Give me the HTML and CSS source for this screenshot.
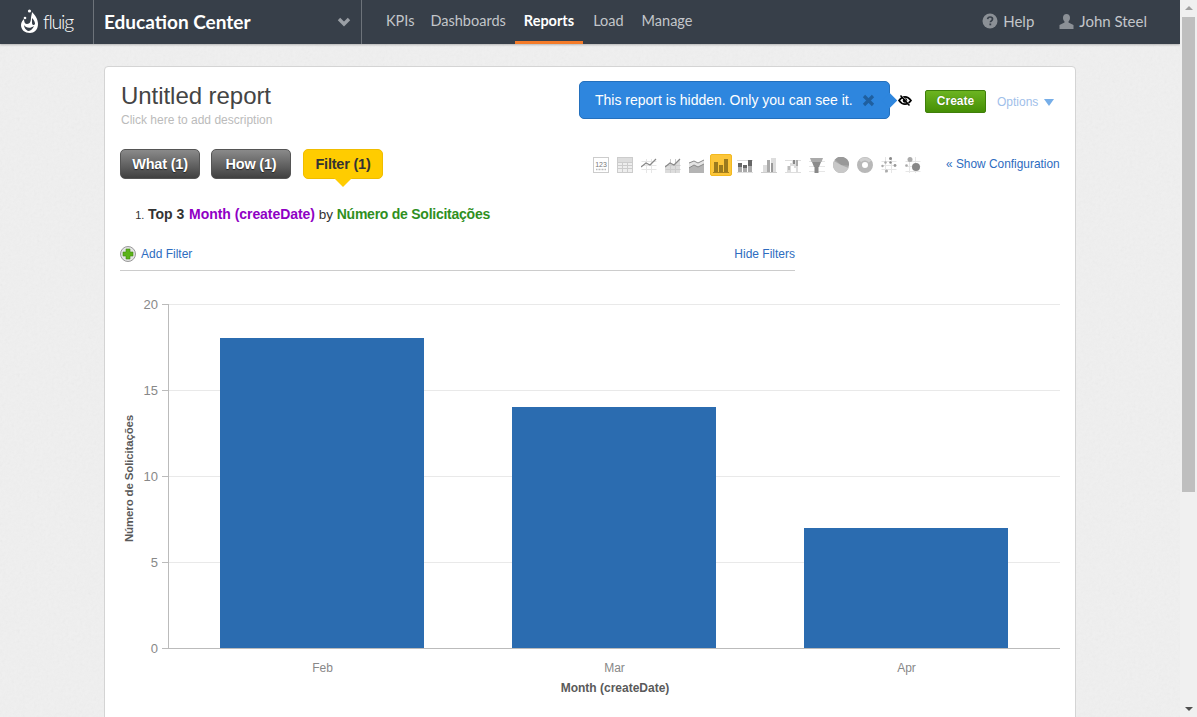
FILE: index.html
```html
<!DOCTYPE html>
<html lang="en">
<head>
<meta charset="utf-8">
<title>Untitled report</title>
<link rel="stylesheet" href="styles.css">
</head>
<body>
<div class="viewport">
  <div class="page">
    <header class="topbar">
      <a class="logo">
        <svg class="logo-mark" width="19" height="26" viewBox="0 0 19 26">
          <circle cx="9.500" cy="2" r="1.600" fill="#fff"/>
          <circle cx="5" cy="9" r="1.300" fill="#fff"/>
          <path d="M12 3c3 3 6 7 6 12 0 6-4 9-8 9-5 0-9-3-9-8 0-3 2-5 3-6 0 3 1 5 3 5 3 0 4-3 4-6 0-2 1-4 1-6z" fill="#fff"/>
          <path d="M4 16c2 3 6 4 10 1-1 3-4 5-6 5-2-1-4-3-4-6z" fill="#373f49"/>
          <path d="M12 9c2 2 3 4 3 6-1 2-3 1-3-1z" fill="#373f49"/>
        </svg>
        <span class="logo-text">fluig</span>
      </a>
      <div class="context">
        <span class="context-name">Education Center</span>
        <svg class="chevron" width="14" height="10" viewBox="0 0 14 10"><path d="M2 2l5 5 5-5" fill="none" stroke="#9a9fa5" stroke-width="3.400"/></svg>
      </div>
      <nav class="nav">
        <a class="nav-item">KPIs</a>
        <a class="nav-item">Dashboards</a>
        <a class="nav-item nav-active">Reports</a>
        <a class="nav-item">Load</a>
        <a class="nav-item">Manage</a>
      </nav>
      <div class="user-menu">
        <a class="help">
          <svg width="16" height="16" viewBox="0 0 16 16"><circle cx="8" cy="8" r="7.500" fill="#8b9096"/><path d="M5.600 6.200C5.800 4.800 6.800 4 8.100 4c1.400 0 2.400.8 2.400 2 0 1-.6 1.500-1.300 2-.6.400-.8.700-.8 1.300" fill="none" stroke="#373f49" stroke-width="1.700"/><rect x="7.400" y="10.500" width="1.800" height="1.800" fill="#373f49"/></svg>
          <span>Help</span>
        </a>
        <a class="user">
          <svg width="15" height="15" viewBox="0 0 15 15"><path d="M7.500 0C5.300 0 4 1.600 4 3.800c0 1.600.7 3 1.500 3.800v1L.5 11v4h14v-4l-5-2.400v-1c.8-.8 1.500-2.200 1.500-3.800C11 1.600 9.700 0 7.500 0z" fill="#8b9096"/></svg>
          <span>John Steel</span>
        </a>
      </div>
    </header>

    <main class="card">
      <div class="report-head">
        <div class="report-title">
          <h1>Untitled report</h1>
          <p>Click here to add description</p>
        </div>
        <div class="report-actions">
          <div class="notice">
            <span>This report is hidden. Only you can see it.</span>
            <svg class="notice-close" width="13" height="13" viewBox="0 0 13 13"><path d="M2 2l9 9M11 2l-9 9" stroke="#1f5f9f" stroke-width="3.200"/></svg>
          </div>
          <svg class="eye" width="14" height="11" viewBox="0 0 14 11"><path d="M1 5.500C2.800 3 4.800 1.800 7 1.800S11.200 3 13 5.500C11.200 8 9.200 9.200 7 9.200S2.800 8 1 5.500z" fill="none" stroke="#000" stroke-width="1.700"/><circle cx="7" cy="5.500" r="2.200" fill="#000"/><path d="M3.400 .5l9 10" stroke="#fff" stroke-width="1"/><path d="M2.500 .5l9 10" stroke="#000" stroke-width="1.500"/></svg>
          <button class="create">Create</button>
          <a class="options">Options<i class="options-arrow"></i></a>
        </div>
      </div>

      <div class="tabs-row">
        <div class="tabs">
          <a class="tab">What (1)</a>
          <a class="tab">How (1)</a>
          <a class="tab tab-active">Filter (1)</a>
        </div>
        <div class="chart-types">
          <svg class="ct" viewBox="0 0 16 16"><rect x=".5" y=".5" width="15" height="15" fill="#fff" stroke="#ccc"/><text x="8" y="9.500" class="ct-num">123</text><path d="M3 12.500h10" stroke="#bbb" stroke-dasharray="1 .5" stroke-width="1.500"/></svg>
          <svg class="ct" viewBox="0 0 16 16"><rect x=".5" y=".5" width="15" height="15" fill="#eee" stroke="#ccc"/><path d="M0 5.500h16M0 8.500h16M0 11.500h16M5.500 0v16M10.500 0v16" stroke="#ccc"/><rect x="1" y="1" width="14" height="4" fill="#ddd"/></svg>
          <svg class="ct" viewBox="0 0 16 16"><path d="M.5 4.500h15M.5 8.500h15M.5 12.500h15M5.500 2v14M10.500 2v14" stroke="#e6e6e6"/><path d="M0 10l5-4 4 2 6-6" fill="none" stroke="#888" stroke-width="1.200"/></svg>
          <svg class="ct" viewBox="0 0 16 16"><path d="M0 10l5-4 4 2 6-6v14H0z" fill="#dcdcdc"/><path d="M.5 8.500h15M.5 12.500h15M5.500 2v14M10.500 2v14" stroke="#ccc"/><path d="M0 10l5-4 4 2 6-6" fill="none" stroke="#888" stroke-width="1.200"/></svg>
          <svg class="ct" viewBox="0 0 16 16"><path d="M0 6l5-2 4 2 6-3v13H0z" fill="#e4e4e4"/><path d="M0 11l5-3 4 2 6-3v9H0z" fill="#b4b4b4"/><path d="M0 6l5-2 4 2 6-3M0 11l5-3 4 2 6-3" fill="none" stroke="#888"/></svg>
          <span class="ct-active"><svg width="16" height="16" viewBox="0 0 16 16"><path d="M0 15.500h16" stroke="#a8801c"/><rect x="1" y="5" width="4" height="10" fill="#9b7a1e"/><rect x="6" y="8" width="4" height="7" fill="#9b7a1e"/><rect x="11" y="2" width="4" height="13" fill="#9b7a1e"/></svg></span>
          <svg class="ct" viewBox="0 0 16 16"><path d="M0 15.500h16M0 3.500h16" stroke="#ddd"/><rect x="1" y="6" width="4" height="4" fill="#666"/><rect x="1" y="10" width="4" height="5" fill="#aaa"/><rect x="6" y="8" width="4" height="3" fill="#666"/><rect x="6" y="11" width="4" height="4" fill="#aaa"/><rect x="11" y="3" width="4" height="6" fill="#666"/><rect x="11" y="9" width="4" height="6" fill="#aaa"/></svg>
          <svg class="ct" viewBox="0 0 16 16"><path d="M0 15.500h16" stroke="#ccc"/><rect x="2" y="8" width="4" height="7" fill="#ddd"/><rect x="6" y="3" width="3" height="12" fill="#aaa"/><rect x="10" y="1" width="5" height="14" fill="#ddd"/><rect x="10" y="6" width="2" height="9" fill="#999"/></svg>
          <svg class="ct" viewBox="0 0 16 16"><path d="M0 3.500h16M0 15.500h16" stroke="#ddd"/><path d="M2 15V9h3V6h2V3h6v12h-2v-4H9v-2H6v6z" fill="#ddd"/><rect x="8" y="3" width="2" height="4" fill="#888"/><rect x="11" y="3" width="2" height="6" fill="#aaa"/><rect x="3" y="9" width="2" height="4" fill="#bbb"/></svg>
          <svg class="ct" viewBox="0 0 16 16"><path d="M0 4.500h16M0 9.500h16M0 14.500h16" stroke="#e6e6e6"/><path d="M1 1h13l-1.500 4h-10z" fill="#aaa"/><path d="M3 5h9l-2 5H5z" fill="#8c8c8c"/><rect x="5.500" y="10" width="4" height="6" fill="#888"/></svg>
          <svg class="ct" viewBox="0 0 16 16"><circle cx="8" cy="8" r="8" fill="#aaa"/><path d="M8 8L2 2.500A8 8 0 0 1 16 8.500z" fill="#999"/><path d="M8 8L1 4 0 8a8 8 0 0 0 8 8 8 8 0 0 0 7.500-5z" fill="#c8c8c8"/></svg>
          <svg class="ct" viewBox="0 0 16 16"><circle cx="8" cy="8" r="5.500" fill="none" stroke="#b8b8b8" stroke-width="5"/><path d="M3 4a6.500 6.500 0 0 1 10 .5" fill="none" stroke="#d0d0d0" stroke-width="3"/></svg>
          <svg class="ct" viewBox="0 0 16 16"><path d="M.5 4.500h15M.5 8.500h15M.5 12.500h15M4.500 0v16M10.500 0v16" stroke="#e6e6e6"/><circle cx="9.500" cy="1.500" r="1.500" fill="#888"/><circle cx="4.500" cy="5.500" r="1.200" fill="#aaa"/><circle cx="9.500" cy="5.500" r="1.200" fill="#888"/><circle cx="14" cy="8.500" r="1.400" fill="#999"/><circle cx="1.500" cy="9" r="1.200" fill="#aaa"/><circle cx="5.500" cy="14" r="1.500" fill="#aaa"/></svg>
          <svg class="ct" viewBox="0 0 16 16"><path d="M.5 4.500h15M.5 9.500h15M.5 14.500h15M4.500 0v16M10.500 0v16" stroke="#e6e6e6"/><circle cx="5" cy="2.500" r="2.500" fill="#aaa"/><circle cx="1.500" cy="8.500" r="1.300" fill="#aaa"/><circle cx="11" cy="10" r="4" fill="#888"/></svg>
        </div>
        <a class="show-config">« Show Configuration</a>
      </div>

      <ol class="criteria">
        <li><b class="top">Top 3</b> <b class="dim">Month (createDate)</b> by <b class="measure">Número de Solicitações</b></li>
      </ol>

      <div class="filter-bar">
        <a class="add-filter">
          <svg width="16" height="16" viewBox="0 0 16 16"><circle cx="8" cy="8" r="7.500" fill="#e4e4e4" stroke="#999"/><path d="M6 3h4v3h3v4h-3v3H6v-3H3V6h3z" fill="#5bb318" stroke="#3f8a10" stroke-width=".6"/></svg>
          <span>Add Filter</span>
        </a>
        <a class="hide-filters">Hide Filters</a>
      </div>

      <svg class="chart" width="940" height="410" viewBox="0 0 940 410">
        <g class="grid">
          <path d="M48 14.500H940M48 100.500H940M48 186.500H940M48 272.500H940"/>
        </g>
        <rect x="100" y="48" width="204" height="310" class="bar"/>
        <rect x="392" y="117" width="204" height="241" class="bar"/>
        <rect x="684" y="238" width="204" height="120" class="bar"/>
        <path class="axis" d="M42 14.500H48M42 100.500H48M42 186.500H48M42 272.500H48M42 358.500H940M48.500 14V359"/>
        <g class="ylabels">
          <text x="38" y="19">20</text>
          <text x="38" y="105">15</text>
          <text x="38" y="191">10</text>
          <text x="38" y="277">5</text>
          <text x="38" y="363">0</text>
        </g>
        <g class="xlabels">
          <text x="202.500" y="382">Feb</text>
          <text x="494.500" y="382">Mar</text>
          <text x="786.500" y="382">Apr</text>
        </g>
        <text class="xtitle" x="495" y="402">Month (createDate)</text>
        <text class="ytitle" transform="translate(13 188.500) rotate(-90)">Número de Solicitações</text>
      </svg>
    </main>
  </div>
  <div class="scrollbar">
    <i class="sb-up"></i>
    <div class="sb-track"><div class="sb-thumb"></div></div>
    <i class="sb-down"></i>
  </div>
</div>
</body>
</html>
```

FILE: styles.css
```css
* { box-sizing: border-box; }
html, body { margin: 0; height: 100%; overflow: hidden; }
body { font-family: "Liberation Sans", Arial, sans-serif; color: #333; background: #eee; }
a { text-decoration: none; }

.viewport { display: flex; height: 717px; }
.page {
  flex: 1; min-width: 0; display: flex; flex-direction: column; align-items: center; overflow: hidden;
  background-color: #efefef;
  background-image: url("data:image/svg+xml,%3Csvg xmlns='http://www.w3.org/2000/svg' width='256' height='256'%3E%3Cfilter id='n'%3E%3CfeTurbulence type='fractalNoise' baseFrequency='.35' numOctaves='3' stitchTiles='stitch'/%3E%3CfeColorMatrix values='0 0 0 0 .5 0 0 0 0 .5 0 0 0 0 .5 .35 .35 .35 0 -.42'/%3E%3C/filter%3E%3Crect width='256' height='256' filter='url(%23n)' opacity='.22'/%3E%3C/svg%3E");
}

/* top bar */
.topbar {
  align-self: stretch; flex: none; height: 44px; display: flex; align-items: stretch;
  background: #373f49; box-shadow: 0 1px 2px rgba(0,0,0,.25);
  font-family: Lato, "Liberation Sans", sans-serif;
}
.logo { width: 93px; display: flex; align-items: center; padding: 0 0 1px 20px; gap: 4px; color: #fff; }
.logo-text { font-size: 19.500px; font-weight: 300; letter-spacing: -1.200px; }
.context {
  width: 269px; display: flex; align-items: center; justify-content: space-between;
  padding: 0 10px 1px; border-left: 1px solid #6d737a; border-right: 1px solid #6d737a;
}
.context-name { font-size: 19px; font-weight: 700; color: #fff; }
.nav { display: flex; padding-left: 15px; }
.nav-item { padding: 0 9px; line-height: 42px; font-size: 14.500px; color: #c3c6ca; border-bottom: 3px solid transparent; height: 44px; }
.nav-item:first-child { margin-right: -2px; }
.nav-active { margin-right: 1px; color: #fff; font-weight: 700; border-bottom-color: #f47b29; }
.user-menu { margin-left: auto; display: flex; align-items: center; gap: 25px; padding: 0 33px 2px 0; font-size: 15px; color: #c3c6ca; }
.help, .user { display: flex; align-items: center; gap: 5px; color: #c3c6ca; }

/* card */
.card {
  width: 972px; height: 700px; flex: none; margin-top: 22px; background: #fff;
  border: 1px solid #d4d4d4; border-radius: 4px; padding: 14px 15px 0;
}
.report-head { display: flex; justify-content: space-between; height: 68px; }
.report-title { padding-left: 1px; }
.report-title h1 { margin: 0; font-size: 24px; line-height: 30px; font-weight: 400; color: #444; letter-spacing: -.05px; }
.report-title p { margin: 2px 0 0; font-size: 12px; line-height: 14px; color: #bbb; }
.report-actions { display: flex; align-items: center; height: 38px; }
.notice {
  position: relative; width: 311px; height: 38px; display: flex; align-items: center; padding-left: 15px; gap: 9px;
  background: #2e86de; border: 1px solid #2470bd; border-radius: 5px; color: #fff; font-size: 14px;
}
.notice::after {
  content: ""; position: absolute; right: -6px; top: 13px; width: 11px; height: 11px;
  background: #2e86de; transform: rotate(45deg);
}
.eye { margin: 0 13px 0 8px; }
.create {
  width: 61px; height: 23px; margin-top: 2px; padding: 0; border: 1px solid #3f7f0a; border-radius: 2px; font: 700 12px "Liberation Sans", sans-serif;
  color: #fff; background: linear-gradient(#6cb421, #458f05); text-shadow: 0 0 1px #2d5c02;
}
.options { margin: 4px 5px 0 11px; width: 58px; font-size: 12px; color: #9fc0ea; display: flex; align-items: center; }
.options-arrow { margin-left: 6px; border: 5px solid transparent; border-top: 7px solid #76aee8; border-bottom: 0; }

/* tabs */
.tabs-row { display: flex; align-items: flex-start; height: 30px; }
.tabs { display: flex; }
.tab {
  width: 80px; height: 30px; margin-right: 11px; text-align: center; line-height: 29px; font-size: 14.500px; font-weight: 700;
  color: #fff; border-radius: 5px; background: linear-gradient(#8a8a8a, #404040);
  border: 1px solid #555; letter-spacing: -.2px; text-shadow: 0 1px 1px #222;
}
.tab-active { position: relative; margin: 0 0 0 1px; background: #fc0; border-color: #f0bd00; color: #333; text-shadow: none; }
.tab-active::after {
  content: ""; position: absolute; left: 30px; bottom: -9px; border: 9px solid transparent; border-top-color: #fc0; border-bottom: 0;
}
.chart-types { margin-left: 210px; display: flex; gap: 8px; align-items: center; height: 32px; }
.ct { width: 16px; height: 16px; flex: none; }
.ct-num { font: 7px "Liberation Sans", sans-serif; text-anchor: middle; fill: #777; }
.ct-active {
  width: 22px; height: 22px; margin: 0 -3px; flex: none; display: flex; align-items: center; justify-content: center;
  background: #fcc63a; border: 1px solid #f3b920; border-radius: 2px;
}
.show-config { margin-left: 25px; white-space: nowrap; font-size: 11.900px; line-height: 30px; color: #2d6cc0; }

/* criteria */
.criteria { margin: 27px 0 0; padding: 0 0 0 28px; font-size: 13.500px; line-height: 16px; color: #333; }
.criteria li::marker { font-size: 11px; content: counter(list-item) ".\2004"; }
.top { font-size: 14px; margin-right: 1px; }
.dim { font-size: 14px; letter-spacing: -.05px; color: #9000c4; }
.measure { font-size: 14px; letter-spacing: -.25px; color: #2f8f1e; }

/* filters */
.filter-bar {
  width: 675px; height: 33px; margin-top: 15px; display: flex; justify-content: space-between; align-items: center;
  border-bottom: 1px solid #ccc; font-size: 12px;
}
.add-filter { display: flex; align-items: center; gap: 5px; color: #2d6cc0; }
.hide-filters { color: #2d6cc0; }

/* chart */
.chart { display: block; margin-top: 19px; font-family: "Liberation Sans", sans-serif; }
.grid path { stroke: #e9e9e9; fill: none; }
.bar { fill: #2b6cb0; }
.axis { stroke: #bbb; fill: none; }
.ylabels text { font-size: 13px; fill: #888; text-anchor: end; }
.xlabels text { font-size: 12px; fill: #888; text-anchor: middle; }
.xtitle { font-size: 12px; font-weight: 700; fill: #5a5a5a; text-anchor: middle; }
.ytitle { font-size: 11.500px; font-weight: 700; fill: #5a5a5a; text-anchor: middle; letter-spacing: -.15px; }

/* scrollbar */
.scrollbar { flex: none; width: 17px; background: #f0f0f0; display: flex; flex-direction: column; align-items: center; position: relative; }
.sb-up { margin-top: 6px; border: 4px solid transparent; border-bottom: 4px solid #a0a0a0; border-top: 0; width: 0; }
.sb-track { flex: 1; align-self: stretch; padding: 7px 2px 0 2px; }
.sb-thumb { height: 475px; background: #bfbfbf; }
.sb-down { margin-bottom: 6px; border: 4px solid transparent; border-top: 4px solid #505050; border-bottom: 0; }
```
